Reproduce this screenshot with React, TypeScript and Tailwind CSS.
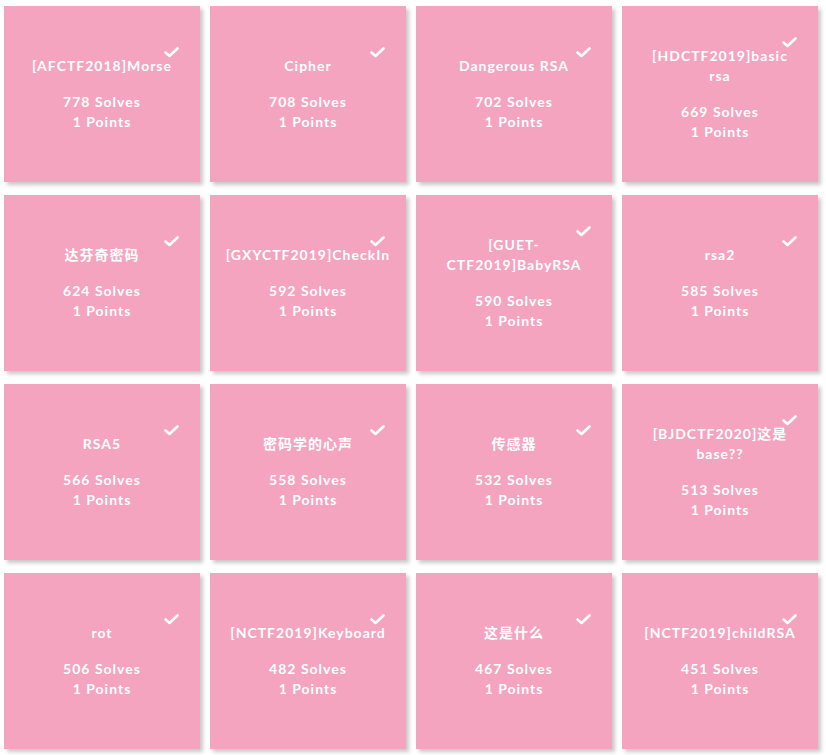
import React from "react";

type Challenge = {
  title: string;
  solves: number;
  points: number;
};

const challenges: Challenge[] = [
  { title: "[AFCTF2018]Morse", solves: 778, points: 1 },
  { title: "Cipher", solves: 708, points: 1 },
  { title: "Dangerous RSA", solves: 702, points: 1 },
  { title: "[HDCTF2019]basic\nrsa", solves: 669, points: 1 },
  { title: "达芬奇密码", solves: 624, points: 1 },
  { title: "[GXYCTF2019]CheckIn", solves: 592, points: 1 },
  { title: "[GUET-CTF2019]BabyRSA", solves: 590, points: 1 },
  { title: "rsa2", solves: 585, points: 1 },
  { title: "RSA5", solves: 566, points: 1 },
  { title: "密码学的心声", solves: 558, points: 1 },
  { title: "传感器", solves: 532, points: 1 },
  { title: "[BJDCTF2020]这是base??", solves: 513, points: 1 },
  { title: "rot", solves: 506, points: 1 },
  { title: "[NCTF2019]Keyboard", solves: 482, points: 1 },
  { title: "这是什么", solves: 467, points: 1 },
  { title: "[NCTF2019]childRSA", solves: 451, points: 1 },
];

const Check: React.FC = () => (
  <svg width="15" height="11" viewBox="0 0 15 11" className="absolute right-[21px] -top-[9px]">
    <path d="M1.5 5.5 L5.5 9 L13.5 1.5" fill="none" stroke="white" strokeWidth="2.6" strokeLinecap="round" strokeLinejoin="round" />
  </svg>
);

const ChallengeCard: React.FC<{ c: Challenge }> = ({ c }) => {
  return (
    <div className="h-[176px] bg-[#f4a4bf] shadow-[3px_3px_4px_rgba(0,0,0,0.22)] flex items-center justify-center">
      <div className="relative w-full text-center text-white text-[14px] font-bold leading-[20px] tracking-[1px]">
        <Check />
        <div className="px-[14px] break-words whitespace-pre-line">{c.title}</div>
        <div className="mt-4">{c.solves} Solves</div>
        <div>{c.points} Points</div>
      </div>
    </div>
  );
};

const App: React.FC = () => {
  return (
    <div
      className="bg-white w-[826px] min-h-[755px] pl-[4px] pt-[6px]"
      style={{ fontFamily: 'Lato, "Noto Sans CJK SC", sans-serif' }}
    >
      <div className="grid grid-cols-[repeat(4,196px)] gap-x-[10px] gap-y-[13px]">
        {challenges.map((c) => (
          <ChallengeCard key={c.title} c={c} />
        ))}
      </div>
    </div>
  );
};

export default App;
